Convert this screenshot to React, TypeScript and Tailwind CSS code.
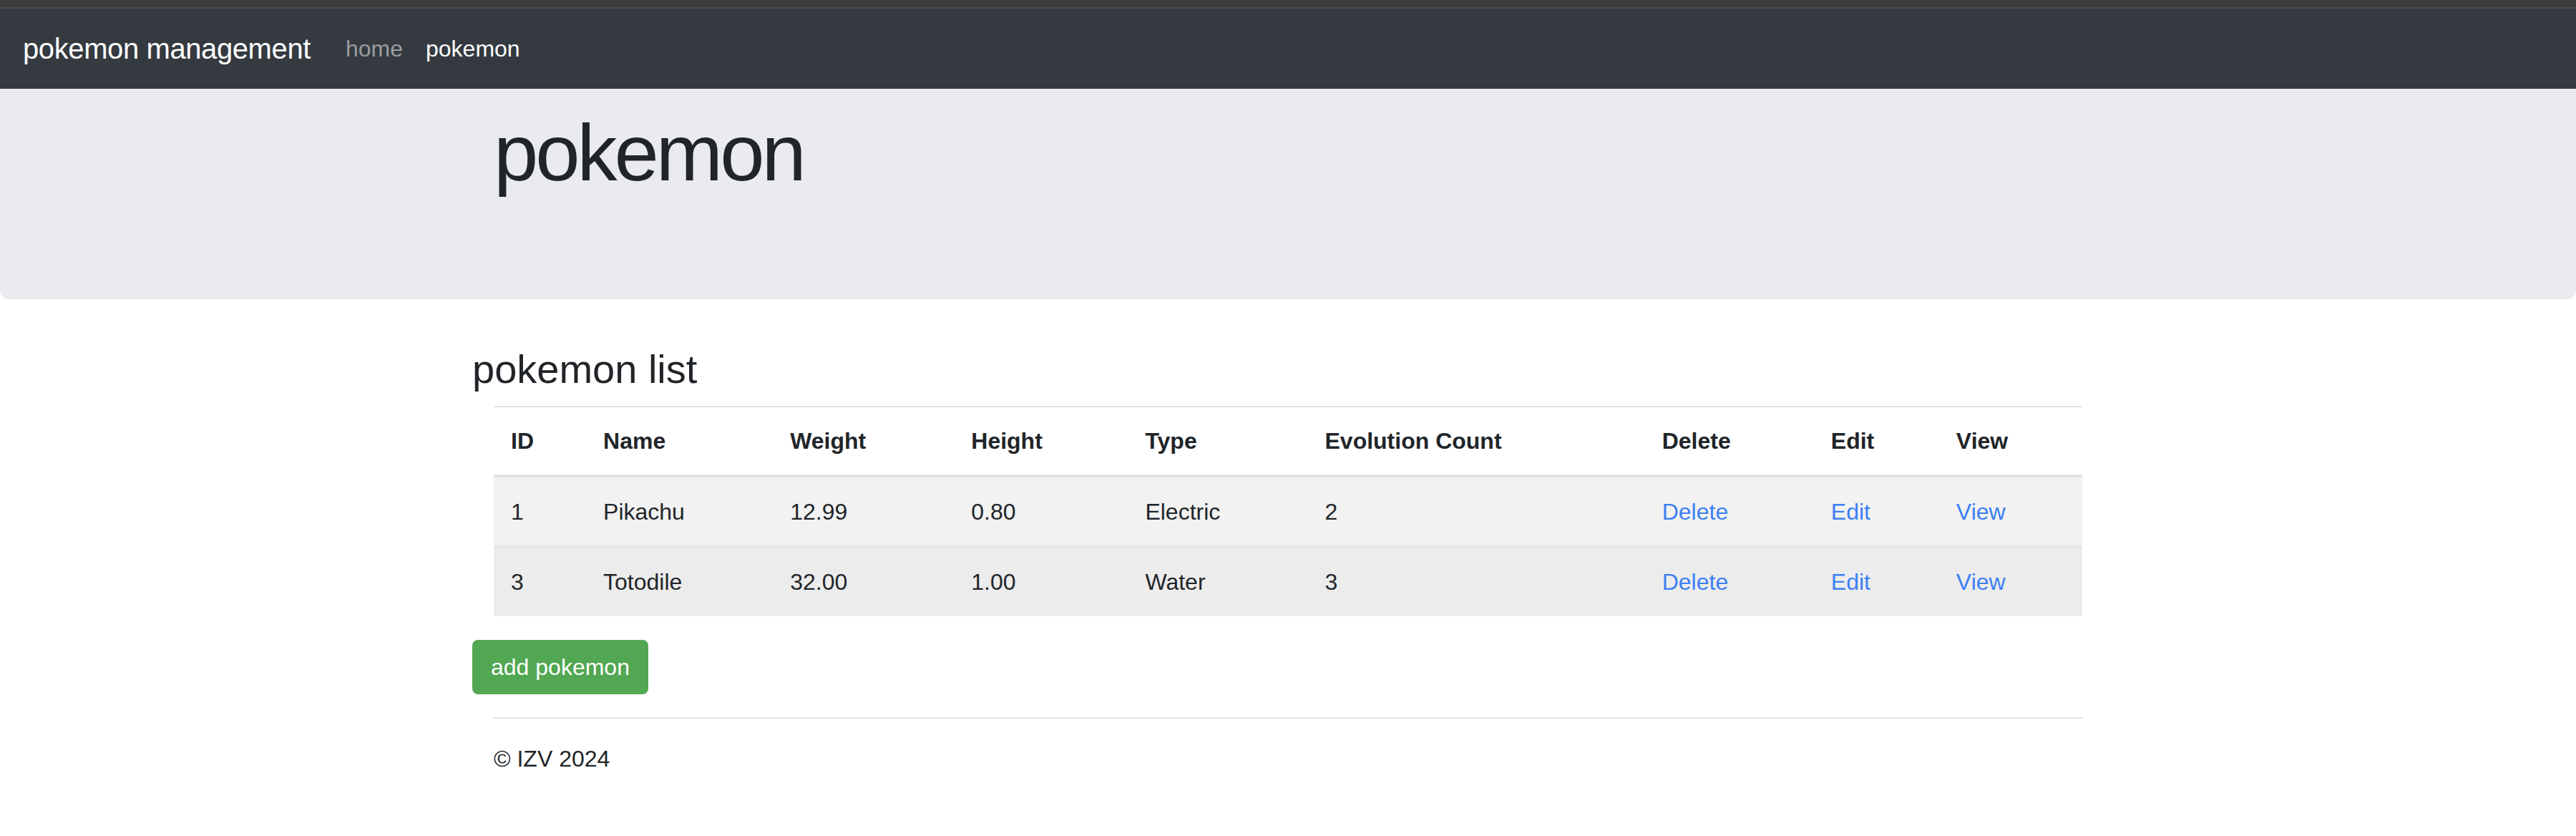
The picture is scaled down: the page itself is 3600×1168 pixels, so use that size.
// pokemon 관리 페이지
// 상단 네비게이션, 점보트론 헤더, 포켓몬 목록 테이블, 추가 버튼, 푸터를 표시한다

interface Pokemon {
  id: number
  name: string
  weight: string
  height: string
  type: string
  evolutionCount: number
}

const pokemons: Pokemon[] = [
  { id: 1, name: 'Pikachu', weight: '12.99', height: '0.80', type: 'Electric', evolutionCount: 2 },
  { id: 3, name: 'Totodile', weight: '32.00', height: '1.00', type: 'Water', evolutionCount: 3 },
]

const columns = [
  { label: 'ID', width: 'w-[129px]' },
  { label: 'Name', width: 'w-[261px]' },
  { label: 'Weight', width: 'w-[253px]' },
  { label: 'Height', width: 'w-[243px]' },
  { label: 'Type', width: 'w-[251px]' },
  { label: 'Evolution Count', width: 'w-[471px]' },
  { label: 'Delete', width: 'w-[236px]' },
  { label: 'Edit', width: 'w-[175px]' },
  { label: 'View', width: 'w-[200px]' },
]

export default function App() {
  return (
    <div className="min-h-screen bg-white font-['Liberation_Sans',Arial,sans-serif] text-[#212529]">
      {/* 창 상단 띠 */}
      <div className="h-[10px] bg-[#3c3c3c]" />
      <div className="h-[2px] bg-[#4b4b4b]" />

      {/* 네비게이션 바 */}
      <nav className="flex h-[112px] items-center bg-[#343a40] px-[32px]">
        <a href="#" className="mr-[33px] text-[40px] leading-[60px] tracking-[-0.4px] text-white">
          pokemon management
        </a>
        <a href="#" className="px-[16px] text-[32px] leading-[48px] text-[#9a9da0]">
          home
        </a>
        <a href="#" className="px-[16px] text-[32px] leading-[48px] text-white">
          pokemon
        </a>
      </nav>

      {/* 점보트론 */}
      <div className="mb-[64px] h-[294px] rounded-b-[12px] bg-[#eaebef]">
        <div className="mx-auto w-[2280px] px-[30px] pt-[23px]">
          <h1 className="text-[112px] font-light leading-[134px] tracking-[-4px]">pokemon</h1>
        </div>
      </div>

      {/* 목록 영역 */}
      <main className="mx-auto w-[2280px]">
        <h3 className="mb-[18px] text-[56px] font-medium leading-[67px]">pokemon list</h3>

        <div className="px-[30px]">
          <table className="w-full table-fixed text-left text-[32px] leading-[48px]">
            <thead>
              <tr>
                {columns.map((col) => (
                  <th
                    key={col.label}
                    className={`${col.width} border-t-2 border-b-4 border-[#dee2e6] px-[24px] py-[23px] font-bold`}
                  >
                    {col.label}
                  </th>
                ))}
              </tr>
            </thead>
            <tbody>
              {pokemons.map((p, i) => (
                <tr key={p.id} className={i === 0 ? 'bg-[#f2f2f2]' : 'bg-[#ececec]'}>
                  <td className="border-t-2 border-[#dee2e6] px-[24px] py-[24px]">{p.id}</td>
                  <td className="border-t-2 border-[#dee2e6] px-[24px] py-[24px]">{p.name}</td>
                  <td className="border-t-2 border-[#dee2e6] px-[24px] py-[24px]">{p.weight}</td>
                  <td className="border-t-2 border-[#dee2e6] px-[24px] py-[24px]">{p.height}</td>
                  <td className="border-t-2 border-[#dee2e6] px-[24px] py-[24px]">{p.type}</td>
                  <td className="border-t-2 border-[#dee2e6] px-[24px] py-[24px]">{p.evolutionCount}</td>
                  <td className="border-t-2 border-[#dee2e6] px-[24px] py-[24px]">
                    <a href="#" className="text-[#3b7ff3]">Delete</a>
                  </td>
                  <td className="border-t-2 border-[#dee2e6] px-[24px] py-[24px]">
                    <a href="#" className="text-[#3b7ff3]">Edit</a>
                  </td>
                  <td className="border-t-2 border-[#dee2e6] px-[24px] py-[24px]">
                    <a href="#" className="text-[#3b7ff3]">View</a>
                  </td>
                </tr>
              ))}
            </tbody>
          </table>
        </div>

        {/* 추가 버튼 */}
        <button className="mt-[33px] rounded-[8px] border-2 border-[#52a752] bg-[#52a752] px-[24px] py-[12px] text-[32px] leading-[48px] text-white">
          add pokemon
        </button>

        {/* 푸터 */}
        <footer className="mt-[32px] px-[30px]">
          <hr className="border-t-2 border-[#e6e6e6]" />
          <p className="mt-[32px] text-[32px] leading-[48px]">© IZV 2024</p>
        </footer>
      </main>
    </div>
  )
}
